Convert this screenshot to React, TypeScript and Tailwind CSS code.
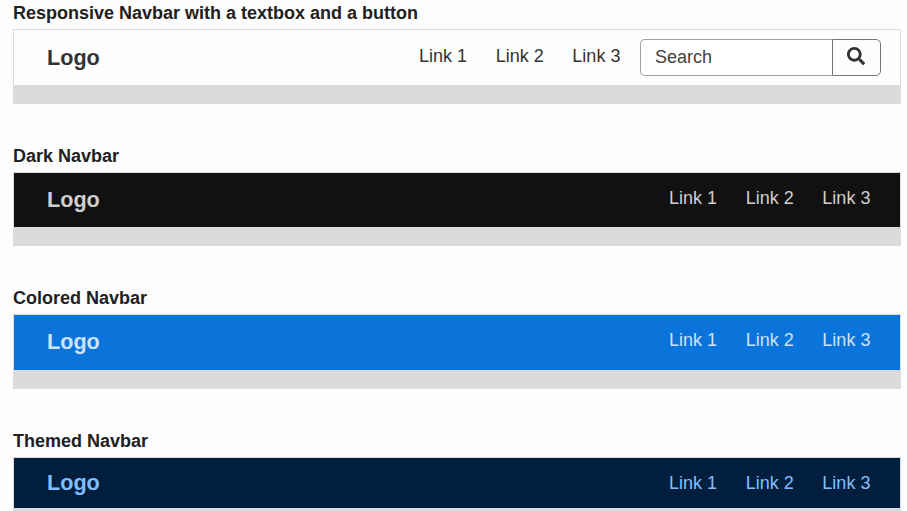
import { FaSearch } from "react-icons/fa";

const links = ["Link 1", "Link 2", "Link 3"];

type DemoProps = {
  title: string;
  titleClass: string;
  barClass: string;
  logoClass: string;
  linksClass: string;
  search?: boolean;
};

function NavbarDemo({ title, titleClass, barClass, logoClass, linksClass, search }: DemoProps) {
  return (
    <section>
      <h2 className={`flex items-start text-[18px] leading-[21px] font-bold text-[#212121] ${titleClass}`}>{title}</h2>
      <div className="border border-[#dbdbdb] bg-[#dbdbdb] pb-[18px]">
        <nav className={`flex items-start justify-between pl-[33px] ${barClass}`}>
          <a className={`text-[21.6px] leading-[26px] font-bold ${logoClass}`}>{"Logo"}</a>
          <div className={`flex items-start ${search ? "pr-[19px]" : "pr-[29.6px]"}`}>
            <div className={`flex gap-[28.7px] text-[18px] leading-[22px] ${linksClass}`}>
              {links.map((l) => (
                <a key={l}>{l}</a>
              ))}
            </div>
            {search && (
              <form className="mt-[9px] ml-[19.6px] flex h-[37px] w-[241px]">
                <input
                  type="text"
                  placeholder="Search"
                  className="w-[192px] rounded-l-[5px] border border-r-0 border-[#a0a0a0] bg-white pb-[2px] pl-[14px] text-[18px] leading-[22px] text-[#333] placeholder:text-[#424242]"
                />
                <button
                  type="button"
                  aria-label="Search"
                  className="flex w-[49px] items-start justify-center rounded-r-[5px] border border-[#757575] pt-[7px] pr-[1px] text-[18px] text-[#333]"
                >
                  <FaSearch />
                </button>
              </form>
            )}
          </div>
        </nav>
      </div>
    </section>
  );
}

export default function App() {
  return (
    <main
      className="h-[511px] w-[907px] overflow-hidden bg-[#fdfdfd] pr-[6px] pl-[13px]"
      style={{ fontFamily: '"Liberation Sans", Arial, sans-serif' }}
    >
      <NavbarDemo
        title="Responsive Navbar with a textbox and a button"
        titleClass="h-[29px] pt-[3px]"
        barClass="h-[55px] bg-[#fefefe]"
        logoClass="pt-[15px] text-[#333]"
        linksClass="pt-[15px] text-[#333]"
        search
      />
      <NavbarDemo
        title="Dark Navbar"
        titleClass="h-[68px] pt-[42px]"
        barClass="h-[54px] bg-[#111111]"
        logoClass="pt-[14px] text-[#cfcfcf]"
        linksClass="pt-[14px] text-[#cfcfcf]"
      />
      <NavbarDemo
        title="Colored Navbar"
        titleClass="h-[68px] pt-[42px]"
        barClass="h-[55px] bg-[#0b74da]"
        logoClass="pt-[14px] text-[#cce3f8]"
        linksClass="pt-[14px] text-[#cce3f8]"
      />
      <NavbarDemo
        title="Themed Navbar"
        titleClass="h-[68px] pt-[42px]"
        barClass="h-[50px] bg-[#001f3f]"
        logoClass="pt-[12px] text-[#80bfff]"
        linksClass="pt-[14px] text-[#80bfff]"
      />
    </main>
  );
}
